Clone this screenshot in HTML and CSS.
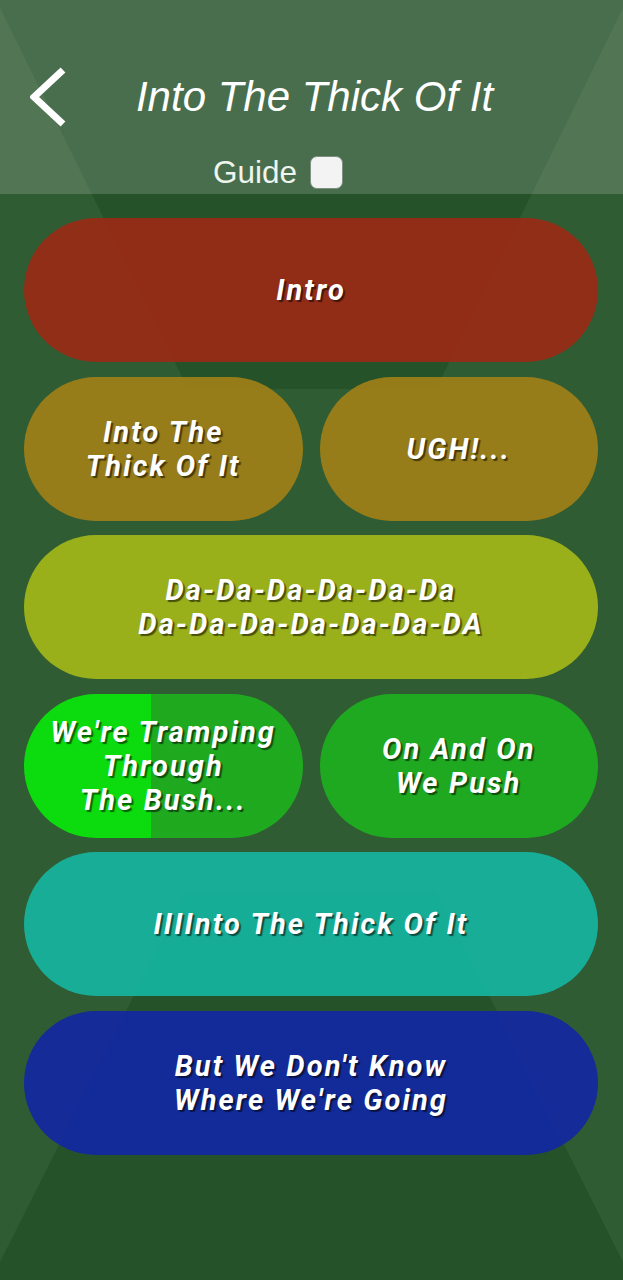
FILE: index.html
```html
<!DOCTYPE html>
<html>
<head>
<meta charset="utf-8">
<link rel="stylesheet" href="styles.css">
</head>
<body>
<div class="app">
  <header class="header">
    <div class="title-row">
      <div class="back">
        <svg width="40" height="60" viewBox="0 0 40 60"><polyline points="33,3 4,30 33,57" fill="none" stroke="#ffffff" stroke-width="7" stroke-linejoin="miter"/></svg>
      </div>
      <h1 class="title">Into The Thick Of It</h1>
      <div></div>
    </div>
    <div class="guide-row">
      <span class="guide-label">Guide</span>
      <span class="checkbox"></span>
    </div>
  </header>
  <main class="grid">
    <div class="btn full red"><span>Intro</span></div>
    <div class="btn ochre"><span>Into The<br>Thick Of It</span></div>
    <div class="btn ochre"><span>UGH!...</span></div>
    <div class="btn full lime"><span>Da-Da-Da-Da-Da-Da<br>Da-Da-Da-Da-Da-Da-DA</span></div>
    <div class="btn green progress"><span>We're Tramping<br>Through<br>The Bush...</span></div>
    <div class="btn green"><span>On And On<br>We Push</span></div>
    <div class="btn full teal"><span>IIIInto The Thick Of It</span></div>
    <div class="btn full blue"><span>But We Don't Know<br>Where We're Going</span></div>
  </main>
</div>
</body>
</html>
```
FILE: styles.css
```css
html, body {
  margin: 0;
  padding: 0;
}
body {
  width: 623px;
  height: 1280px;
  overflow: hidden;
  background: #305c33;
}
.app {
  position: relative;
  width: 623px;
  height: 1280px;
  overflow: hidden;
  background: #305c33;
}
.app::before,
.app::after {
  content: "";
  position: absolute;
  left: 0;
  top: 0;
  width: 623px;
  height: 1280px;
  background: #26522a;
  z-index: 0;
}
.app::before {
  clip-path: polygon(0 0, 623px 0, 623px 8px, 436px 389px, 188px 389px, 0 8px);
}
.app::after {
  clip-path: polygon(187px 890px, 436px 890px, 623px 1262px, 623px 1280px, 0 1280px, 0 1262px);
}
.header {
  position: relative;
  z-index: 1;
  height: 194px;
  background: rgba(255, 255, 255, 0.166);
  display: flex;
  flex-direction: column;
}
.title-row {
  margin-top: 62px;
  height: 70px;
  display: grid;
  grid-template-columns: 1fr auto 1fr;
  align-items: center;
}
.back {
  padding-left: 30px;
  display: flex;
  align-items: center;
}
.back svg {
  display: block;
}
.title {
  margin: 0;
  font-family: "Liberation Sans", Arial, sans-serif;
  font-style: italic;
  font-weight: normal;
  font-size: 42px;
  color: #ffffff;
  line-height: 70px;
  position: relative;
  left: 3px;
}
.guide-row {
  margin-top: 24px;
  height: 33px;
  padding-left: 213px;
  display: flex;
  align-items: center;
  gap: 13px;
}
.guide-label {
  font-family: "Liberation Sans", Arial, sans-serif;
  font-size: 31.5px;
  color: #eef4ee;
  line-height: 33px;
}
.checkbox {
  width: 31px;
  height: 31px;
  border-radius: 7px;
  background: #f3f3f3;
  border: 1px solid #7f8f80;
}
.grid {
  position: relative;
  z-index: 1;
  margin-top: 24px;
  padding: 0 25px 0 24px;
  display: grid;
  grid-template-columns: 1fr 1fr;
  grid-auto-rows: 144px;
  column-gap: 17px;
  row-gap: 14.5px;
}
.btn {
  border-radius: 72px;
  display: flex;
  align-items: center;
  justify-content: center;
  text-align: center;
  font-family: Roboto, "Liberation Sans", sans-serif;
  font-style: italic;
  font-weight: bold;
  font-size: 29px;
  letter-spacing: 2.1px;
  line-height: 34px;
  color: #ffffff;
  text-shadow: 2px 2px 1px rgba(0, 0, 0, 0.55);
}
.full {
  grid-column: 1 / span 2;
}
.red { background: rgba(154, 42, 22, 0.92); }
.ochre { background: rgba(160, 128, 24, 0.92); }
.lime { background: rgba(160, 182, 24, 0.94); }
.green { background: rgba(30, 176, 30, 0.92); }
.progress {
  background: linear-gradient(to right, rgba(10, 226, 12, 0.95) 0, rgba(10, 226, 12, 0.95) 127px, rgba(30, 176, 30, 0.92) 127px);
}
.teal { background: rgba(22, 180, 158, 0.93); }
.blue { background: rgba(18, 40, 160, 0.93); }
```
